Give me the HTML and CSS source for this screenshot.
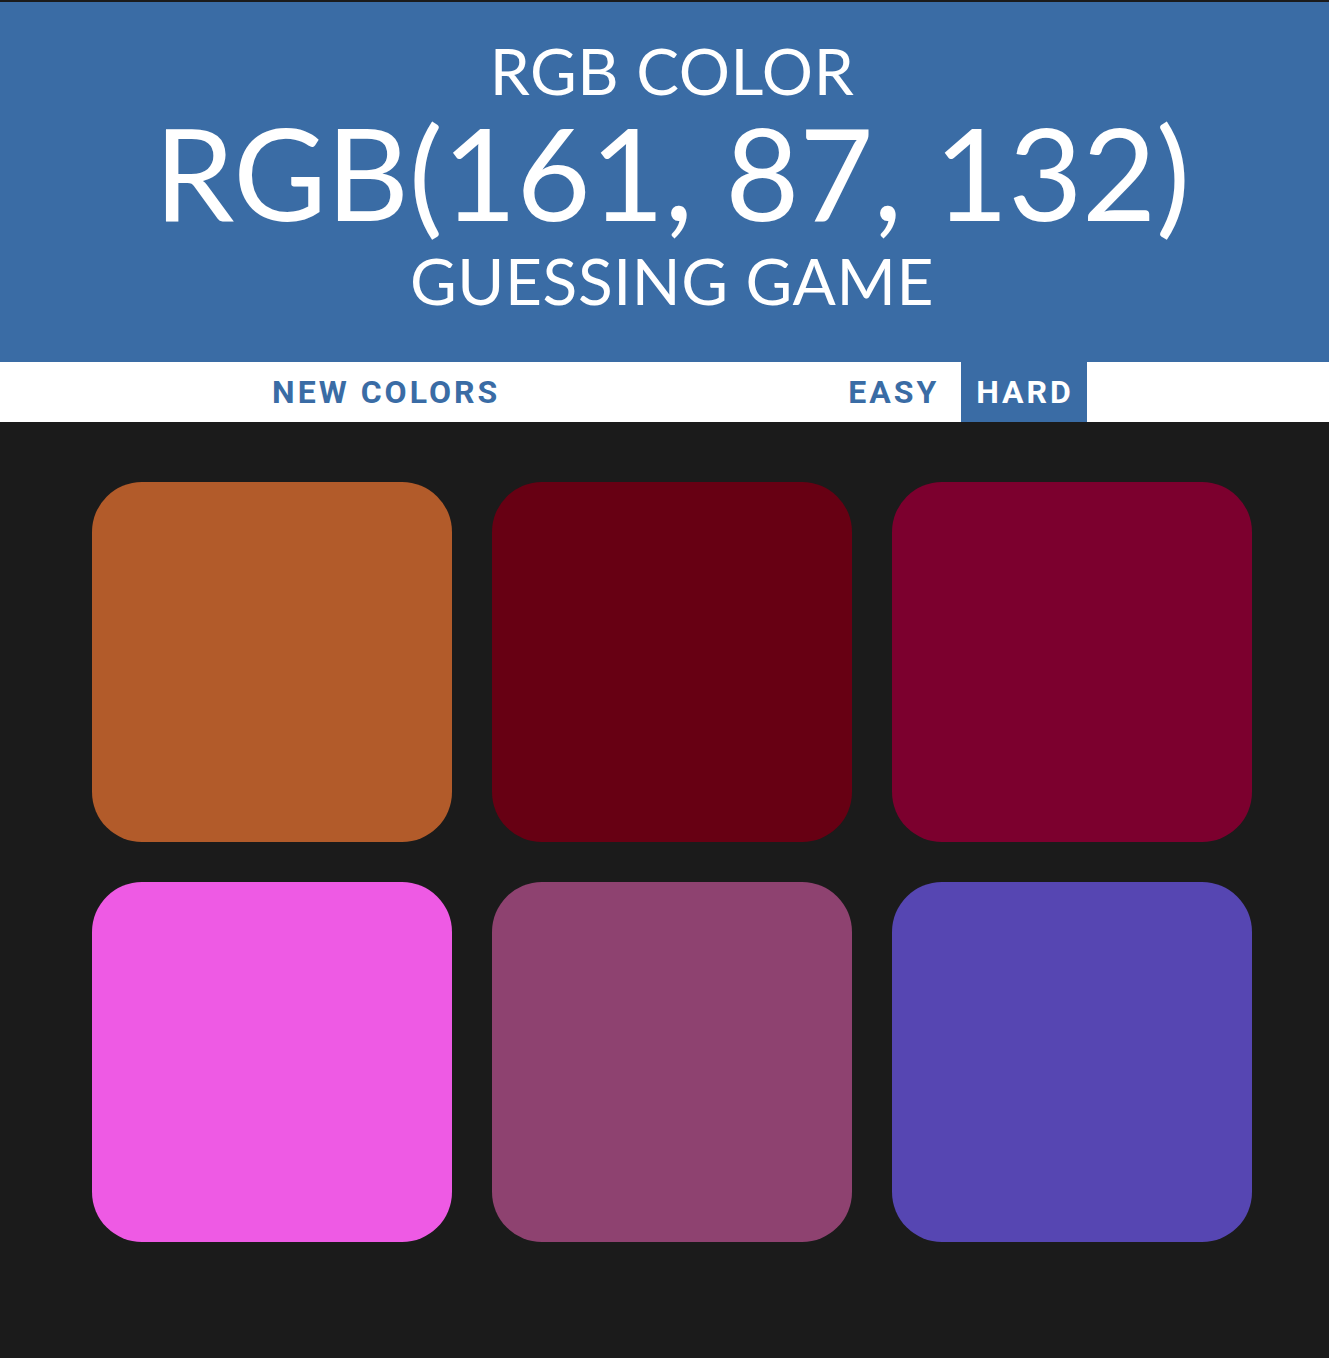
FILE: index.html
```html
<!DOCTYPE html>
<html lang="en">
<head>
<meta charset="utf-8">
<title>Color Game</title>
<link rel="stylesheet" href="styles.css">
</head>
<body>
<div class="page">
  <header class="header">
    <span class="line small">RGB COLOR</span>
    <span class="line big">RGB(161, 87, 132)</span>
    <span class="line small last">GUESSING GAME</span>
  </header>
  <nav class="stripe">
    <button class="btn new">NEW COLORS</button>
    <span class="message"></span>
    <button class="btn easy">EASY</button>
    <button class="btn hard selected">HARD</button>
  </nav>
  <main class="grid">
    <div class="square sq1"></div>
    <div class="square sq2"></div>
    <div class="square sq3"></div>
    <div class="square sq4"></div>
    <div class="square sq5"></div>
    <div class="square sq6"></div>
  </main>
</div>
</body>
</html>
```
FILE: styles.css
```css
html, body {
  margin: 0;
  padding: 0;
}
body {
  background: #1b1b1b;
  overflow-x: hidden;
}
.page {
  width: 1344px;
  padding-top: 2px;
}
.header {
  box-sizing: border-box;
  height: 360px;
  padding-top: 33px;
  background: #3a6ca5;
  color: #ffffff;
  text-align: center;
  font-family: "Lato", "Noto Sans", sans-serif;
  font-weight: 400;
}
.line {
  display: block;
}
.small {
  font-size: 64px;
  line-height: 72px;
  letter-spacing: 0.6px;
}
.big {
  font-size: 128px;
  line-height: 130px;
  letter-spacing: -0.35px;
}
.last {
  line-height: 88px;
}
.stripe {
  height: 60px;
  background: #ffffff;
  display: flex;
  justify-content: center;
  align-items: stretch;
}
.btn {
  border: none;
  background: #ffffff;
  color: #3a6ca5;
  font-family: "Roboto", "Liberation Sans", sans-serif;
  font-weight: 700;
  font-size: 32px;
  letter-spacing: 3px;
  line-height: 60px;
  padding: 0 15px;
  margin: 0;
  text-transform: uppercase;
}
.message {
  width: 318px;
}
.hard {
  margin-left: 7px;
  padding-right: 13px;
}
.selected {
  background: #3a6ca5;
  color: #ffffff;
}
.grid {
  width: 1160px;
  margin: 60px auto 0;
  display: grid;
  grid-template-columns: repeat(3, 360px);
  grid-auto-rows: 360px;
  gap: 40px;
}
.square {
  border-radius: 50px;
}
.sq1 { background: #b25b2a; }
.sq2 { background: #670013; }
.sq3 { background: #7c002e; }
.sq4 { background: #ee5ae4; }
.sq5 { background: #8e4270; }
.sq6 { background: #5646b2; }
```
